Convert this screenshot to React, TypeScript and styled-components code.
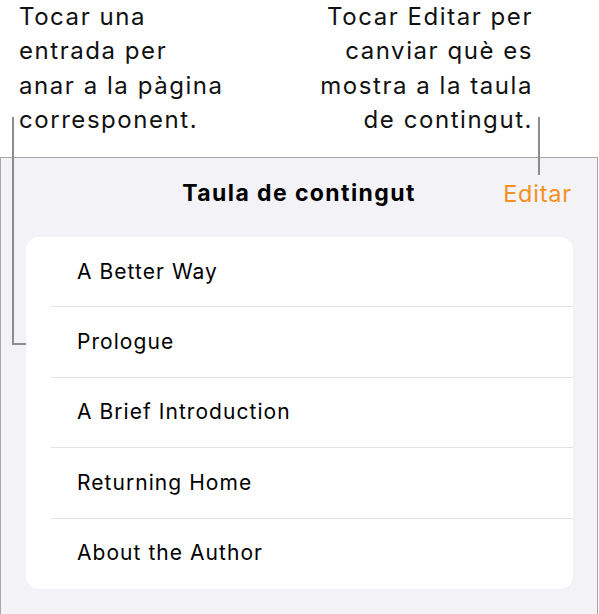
import React from "react";
import styled, { createGlobalStyle } from "styled-components";

const Global = createGlobalStyle`
  html, body { margin: 0; padding: 0; background: #ffffff; }
  body { font-family: Inter, Roboto, "Liberation Sans", Arial, sans-serif; -webkit-font-smoothing: antialiased; }
`;

const Page = styled.div`
  position: relative;
  width: 599px;
  height: 614px;
  overflow: hidden;
  background: #ffffff;
  display: flex;
  flex-direction: column;
`;

const Callouts = styled.div`
  height: 157px;
  display: flex;
  justify-content: space-between;
  align-items: flex-start;
  padding: 0 66px 0 19px;
  box-sizing: border-box;
`;

const CalloutText = styled.div<{ $align: "left" | "right" }>`
  font-size: 24px;
  line-height: 34.3px;
  letter-spacing: 1.55px;
  color: #111;
  text-align: ${(p) => p.$align};
`;

const Panel = styled.div`
  flex: 1;
  background: #f2f2f7;
  border: 1px solid #a7a7a7;
  border-bottom: none;
  width: 598px;
  box-sizing: border-box;
  display: flex;
  flex-direction: column;
`;

const Header = styled.div`
  position: relative;
  height: 79px;
  display: flex;
  align-items: center;
  justify-content: center;
  padding-bottom: 10px;
  box-sizing: border-box;
`;

const Title = styled.div`
  font-size: 23px;
  font-weight: 700;
  letter-spacing: 1.4px;
  color: #000;
`;

const EditButton = styled.div`
  position: absolute;
  right: 25px;
  top: 50%;
  transform: translateY(-50%);
  margin-top: -5px;
  font-size: 23.5px;
  letter-spacing: 0.8px;
  color: #f5901e;
`;

const Card = styled.div`
  margin: 0 24px 0 25px;
  background: #ffffff;
  border-radius: 13px;
  overflow: hidden;
`;

const Row = styled.div<{ $last?: boolean }>`
  position: relative;
  height: 70.4px;
  display: flex;
  align-items: center;
  padding-left: 51px;
  padding-bottom: 2px;
  box-sizing: border-box;
  font-size: 21px;
  letter-spacing: 1.05px;
  color: #000;
  &::after {
    content: "";
    display: ${(p) => (p.$last ? "none" : "block")};
    position: absolute;
    left: 25px;
    right: 0;
    bottom: 0;
    height: 1px;
    background: #e2e2e6;
  }
`;

const Leader = styled.div<{ $left: number; $top: number; $w: number; $h: number }>`
  position: absolute;
  left: ${(p) => p.$left}px;
  top: ${(p) => p.$top}px;
  width: ${(p) => p.$w}px;
  height: ${(p) => p.$h}px;
  background: #8c8c8c;
`;

const items = [
  "A Better Way",
  "Prologue",
  "A Brief Introduction",
  "Returning Home",
  "About the Author",
];

export default function App() {
  return (
    <>
      <Global />
      <Page>
        <Callouts>
          <CalloutText $align="left">
            Tocar una
            <br />
            entrada per
            <br />
            anar a la pàgina
            <br />
            corresponent.
          </CalloutText>
          <CalloutText $align="right">
            Tocar Editar per
            <br />
            canviar què es
            <br />
            mostra a la taula
            <br />
            de contingut.
          </CalloutText>
        </Callouts>
        <Panel>
          <Header>
            <Title>Taula de contingut</Title>
            <EditButton>Editar</EditButton>
          </Header>
          <Card>
            {items.map((t, i) => (
              <Row key={t} $last={i === items.length - 1}>
                {t}
              </Row>
            ))}
          </Card>
        </Panel>
        <Leader $left={12} $top={117} $w={2} $h={228} />
        <Leader $left={12} $top={343} $w={14} $h={2} />
        <Leader $left={538} $top={117} $w={2} $h={58} />
      </Page>
    </>
  );
}
